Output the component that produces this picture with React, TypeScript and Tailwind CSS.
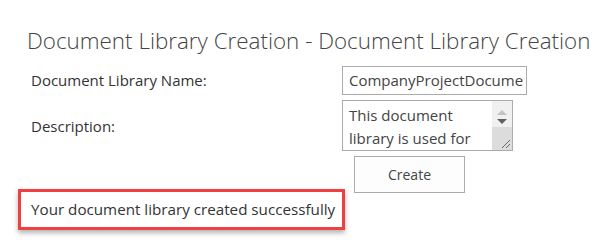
import React from "react"

const font = { fontFamily: '"Open Sans", "Noto Sans", sans-serif' }

function FakeTextarea() {
  return (
    <div className="flex h-[51px] w-[171px] border border-[#ababab] bg-white">
      <div className="flex-1 overflow-hidden pl-[6px] pt-[3px] text-[15px] leading-[23px] text-[#444]">
        This document library is used for
      </div>
      <div className="flex w-[20px] flex-col bg-[#f0f0f0]">
        <div className="flex h-[14px] items-end justify-center">
          <div className="h-0 w-0 border-x-[5px] border-b-[5px] border-x-transparent border-b-[#c2c2c2]" />
        </div>
        <div className="flex h-[12px] items-center justify-center">
          <div className="h-0 w-0 border-x-[5px] border-t-[5px] border-x-transparent border-t-[#606060]" />
        </div>
        <div className="relative flex-1 bg-[#dcdcdc]">
          <svg className="absolute bottom-[1px] right-[1px]" width="12" height="12" viewBox="0 0 12 12">
            <path d="M11 3 L3 11 M11 7 L7 11" stroke="#6a6a6a" strokeWidth="1" />
          </svg>
        </div>
      </div>
    </div>
  )
}

export default function App() {
  return (
    <div className="h-[248px] w-[615px] bg-white pl-[18px] pt-[26px]" style={font}>
      <h1 className="ml-[9px] whitespace-nowrap text-[22.4px] font-light leading-[30px] text-[#444]">
        Document Library Creation - Document Library Creation
      </h1>
      <div className="mt-[10px] flex items-center">
        <div className="w-[324px] pl-[13px] text-[15px] text-[#333]">Document Library Name:</div>
        <div className="flex h-[29px] w-[185px] items-center overflow-hidden whitespace-nowrap border border-[#ababab] pl-[6px] text-[15px] text-[#444]">
          CompanyProjectDocume
        </div>
      </div>
      <div className="mt-[5px] flex">
        <div className="w-[324px] pl-[13px] pt-[15px] text-[15px] text-[#333]">Description:</div>
        <FakeTextarea />
      </div>
      <div className="flex">
        <div className="w-[336px]" />
        <button className="mt-[5px] h-[37px] w-[111px] border border-[#ababab] bg-[#fdfdfd] text-[14px] text-[#444]">
          Create
        </button>
      </div>
      <div className="-mt-[4px] flex h-[41px] w-[327px] items-center whitespace-nowrap border-[3px] border-[#ef4040] pl-[10px] text-[15.2px] text-[#333] shadow-[0_3px_5px_rgba(0,0,0,0.3)]">
        Your document library created successfully
      </div>
    </div>
  )
}
